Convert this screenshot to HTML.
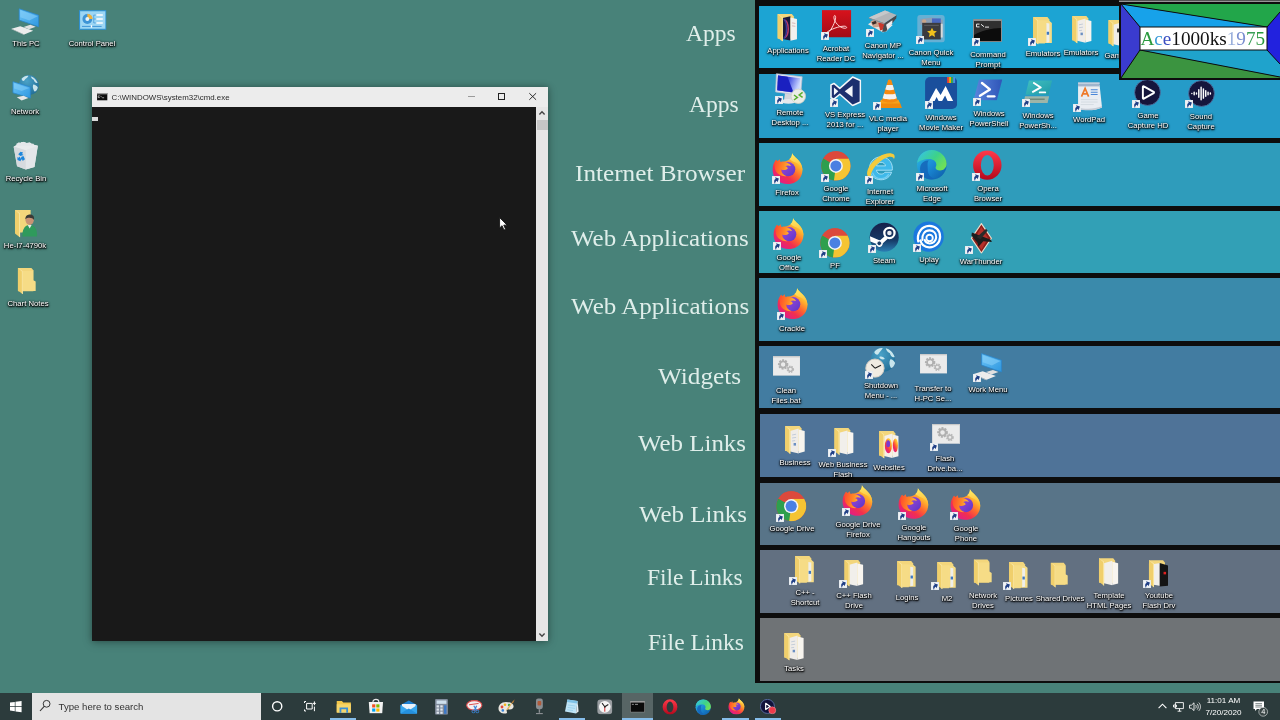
<!DOCTYPE html><html><head><meta charset="utf-8"><title>Desktop</title><style>
*{margin:0;padding:0;box-sizing:border-box}
html,body{width:1280px;height:720px;overflow:hidden;background:#488279;font-family:"Liberation Sans",sans-serif}
#d{position:relative;will-change:transform;filter:blur(.3px);width:1280px;height:720px;overflow:hidden;background:#488279}
.a{position:absolute}
.lb{position:absolute;color:#fff;font-size:8.1px;line-height:10px;text-align:center;white-space:nowrap;transform:translateX(-50%) scaleX(.95);text-shadow:0 1px 1.5px rgba(0,0,0,1),0 0 2px rgba(0,0,0,.9),1px 1px 1.5px rgba(0,0,0,.8),0 1px 3px rgba(0,0,0,.6)}
.cat{position:absolute;color:#dfeeea;font-family:"Liberation Serif",serif;white-space:nowrap;transform-origin:0 0;line-height:1}
svg{position:absolute;overflow:visible}
</style></head><body><div id="d"><svg width="0" height="0" style="position:absolute"><defs>
<linearGradient id="gff" x1="0.95" y1="0.05" x2="0.22" y2="0.98"><stop offset="0" stop-color="#fff04a"/><stop offset="0.3" stop-color="#ffb02e"/><stop offset="0.5" stop-color="#ff6a2e"/><stop offset="0.72" stop-color="#f2304e"/><stop offset="1" stop-color="#df1a92"/></linearGradient><linearGradient id="gfh" x1="0" y1="0.3" x2="1" y2="0.5"><stop offset="0" stop-color="#ff4e2c"/><stop offset="0.55" stop-color="#ff8a26"/><stop offset="1" stop-color="#ffc83a"/></linearGradient>
<linearGradient id="gffp" x1="0" y1="0" x2="1" y2="1"><stop offset="0" stop-color="#a04ad8"/><stop offset="1" stop-color="#5a35c8"/></linearGradient>
<linearGradient id="gfl" x1="0" y1="0" x2="0" y2="1"><stop offset="0" stop-color="#fff06a"/><stop offset="1" stop-color="#ffae2e"/></linearGradient>
<linearGradient id="gacro" x1="0" y1="0" x2="0" y2="1"><stop offset="0" stop-color="#d8121c"/><stop offset="1" stop-color="#a00c16"/></linearGradient>
<linearGradient id="ged" x1="0" y1="0" x2="1" y2="1"><stop offset="0" stop-color="#2fc2df"/><stop offset="0.5" stop-color="#1b8ad6"/><stop offset="1" stop-color="#0c59a4"/></linearGradient>
<linearGradient id="ged2" x1="0" y1="0" x2="1" y2="0.6"><stop offset="0" stop-color="#35c1f1"/><stop offset="0.6" stop-color="#3dd28a"/><stop offset="1" stop-color="#6ee05a"/></linearGradient>
<linearGradient id="gop" x1="0" y1="0" x2="0" y2="1"><stop offset="0" stop-color="#ff3a4a"/><stop offset="1" stop-color="#b4081c"/></linearGradient>
<linearGradient id="gst" x1="0" y1="0" x2="0" y2="1"><stop offset="0" stop-color="#16204a"/><stop offset="0.6" stop-color="#163a66"/><stop offset="1" stop-color="#2a7fb4"/></linearGradient>
<linearGradient id="gps" x1="0" y1="0" x2="1" y2="0"><stop offset="0" stop-color="#5a86dc"/><stop offset="1" stop-color="#2f55b8"/></linearGradient>
<linearGradient id="gpsi" x1="0" y1="0" x2="1" y2="1"><stop offset="0" stop-color="#42c0c0"/><stop offset="1" stop-color="#1e9aa8"/></linearGradient>
<linearGradient id="gmon" x1="0" y1="0" x2="1" y2="1"><stop offset="0" stop-color="#6cc4f6"/><stop offset="1" stop-color="#2f98e0"/></linearGradient>
<linearGradient id="grdp" x1="0" y1="0" x2="1" y2="0.3"><stop offset="0" stop-color="#1a22c8"/><stop offset="0.5" stop-color="#3a48e0"/><stop offset="1" stop-color="#c8d4ff"/></linearGradient>
<radialGradient id="gglobe" cx="0.4" cy="0.3" r="0.8"><stop offset="0" stop-color="#4aa2c8"/><stop offset="1" stop-color="#1f6a92"/></radialGradient>
<linearGradient id="gbin" x1="0" y1="0" x2="1" y2="0"><stop offset="0" stop-color="#d4d8dc"/><stop offset="1" stop-color="#eceef0"/></linearGradient>
<symbol id="sc" viewBox="0 0 8 8"><rect x="0" y="0" width="8" height="8" fill="#f0f3f6" stroke="#cfd8e0" stroke-width="0.5"/><path transform="rotate(-28 4 4.2)" d="M1.3 7.2 C1.1 4.4 2.5 2.9 4.4 2.9 L4.4 1.1 L7.4 4 L4.4 6.8 L4.4 5.1 C3.1 5.1 2.3 5.6 1.3 7.2Z" fill="#1f3f86"/></symbol><symbol id="ff" viewBox="0 0 32 32">
<path d="M20.5 0.3 C22 3.4 26.5 6 29 10 C31.6 14.2 32 19.6 29.6 24 C27 28.8 22 31.8 16 31.8 C7.4 31.8 0.6 25.4 0.6 17.4 C0.6 13 2 9.4 4.2 7 C4.2 8.6 4.6 9.6 5.2 10.4 C5.6 8.6 6.6 7.2 8 6.4 C7.9 7.6 8.3 8.6 9 9.2 C11 8.6 13.4 8.8 15.4 8 C17.8 7 19.6 5 20.2 3 C20.5 2 20.6 1.2 20.5 0.3Z" fill="url(#gff)"/>
<path d="M20.5 0.3 C22 3.4 26.5 6 29 10 C30.6 12.6 31.3 15.4 31.2 18.4 C30 13 26.4 10.6 23.6 9.6 C21.6 8.8 19.4 7.6 18 6.2 C19.2 5.2 19.9 4.1 20.2 3 C20.5 2 20.6 1.2 20.5 0.3Z" fill="url(#gfl)"/>
<circle cx="16.6" cy="16.6" r="7.3" fill="url(#gffp)"/>
<path d="M4.2 7 C6 9 8 9.6 10 9.4 C12.6 9 15.6 9.6 17.8 11.4 C18.6 12 19.2 12.8 19.4 13.4 C17.4 12.4 15 12.6 13.6 13.6 C15 14 16 14.8 16.2 15.8 C14.4 17.8 11.4 17.9 9.4 17 C9.4 20 11.4 22.8 14.8 23.8 C9.6 24.4 4.4 21.4 3 16.2 C2.2 13 2.8 9.6 4.2 7Z" fill="url(#gfh)"/>
</symbol><symbol id="ch" viewBox="0 0 32 32">
<circle cx="16" cy="16" r="15.7" fill="#dc493c"/>
<path d="M16 16 L2.4 8.15 A15.7 15.7 0 0 0 13.9 31.56 L22.8 19.9Z" fill="#2e9f4e"/>
<path d="M16 16 L13.9 31.56 A15.7 15.7 0 0 0 29.6 8.15 L16 8.15Z" fill="#f5c433"/>
<path d="M16 16 L2.4 8.15 A15.7 15.7 0 0 1 29.6 8.15 L16 8.15Z" fill="#dc493c"/>
<path d="M16 16 L9.2 19.9 L2.4 8.15Z" fill="#2e9f4e"/>
<circle cx="16" cy="16" r="7.5" fill="#f2f4f6"/>
<circle cx="16" cy="16" r="5.9" fill="#4a80e2"/>
</symbol><symbol id="ie" viewBox="0 0 32 32">
<path fill-rule="evenodd" d="M29 19.4 H12.2 C12.6 22 14.6 23.6 17.2 23.6 C19 23.6 20.4 22.8 21.2 21.6 H28.4 C26.8 26.4 22.4 29.6 17 29.6 C10 29.6 4.8 24.4 4.8 17.4 C4.8 10.4 10 5.2 17 5.2 C24 5.2 29.2 10.4 29.2 17.4 C29.2 18 29.1 18.8 29 19.4Z M12.3 14.8 H21.9 C21.4 12.4 19.5 11 17.1 11 C14.7 11 12.8 12.4 12.3 14.8Z" fill="#3fb9ea" stroke="#a9e2f7" stroke-width="1"/>
<path d="M8 22 C9.5 26 13 28.4 17 28.4 C20.5 28.4 23.6 26.6 25.4 23.6" fill="none" stroke="#7fd4f4" stroke-width="1.4" opacity="0.8"/>
<path d="M2.6 25 C0.8 20 5.6 11 14.4 5.2 C21 1 28.4 0.2 31 3 C32 4.3 31.8 6.2 30.8 7.8 C30.8 5.2 27.6 3.8 22 6.4 C14 10.2 6.6 19 6 26 C4.6 26.8 3.2 26.2 2.6 25Z" fill="#f3cb3c"/>
</symbol><symbol id="ed" viewBox="0 0 32 32">
<circle cx="16" cy="16" r="15" fill="url(#ged)"/>
<path d="M1.2 14 C2.2 6.4 8.4 1 16 1 C24.4 1 31 7.6 31 15 C31 19 28 21.8 24.4 21.8 C21.6 21.8 19.8 20.6 19.8 19 C19.8 18 20.6 17.4 20.6 15.6 C20.6 12.4 17.4 10 13.4 10 C8 10 3.2 12 1.2 14Z" fill="url(#ged2)"/>
<path d="M12 22 C12 26 15 29.4 20 29.8 C17.5 30.8 14.6 31.2 12 30.4 C6.4 28.8 3 23 4.4 17.6 C5.6 13.4 9.4 11.4 13 11.6 C11 13.4 12 17 12 22Z" fill="#1565b8" opacity="0.85"/>
</symbol><symbol id="op" viewBox="0 0 32 32">
<path fill-rule="evenodd" d="M1 16 A15 15.4 0 1 0 31 16 A15 15.4 0 1 0 1 16Z M9.2 16 A6.8 10.8 0 1 1 22.8 16 A6.8 10.8 0 1 1 9.2 16Z" fill="url(#gop)"/>
</symbol><symbol id="opd" viewBox="0 0 32 32">
<path fill-rule="evenodd" d="M1 16 A15 15.4 0 1 0 31 16 A15 15.4 0 1 0 1 16Z M9.2 16 A6.8 10.8 0 1 1 22.8 16 A6.8 10.8 0 1 1 9.2 16Z" fill="url(#gop)"/>
</symbol><symbol id="steam" viewBox="0 0 32 32">
<circle cx="16" cy="16" r="15.3" fill="url(#gst)"/>
<circle cx="21.5" cy="11.5" r="5.4" fill="none" stroke="#fff" stroke-width="2.4"/>
<circle cx="21.5" cy="11.5" r="2.4" fill="#fff" opacity="0.9"/>
<path d="M1 15 L11.5 19.4 L16.8 14.8 L19.5 18 L14.6 22.4 C14.4 25 12.6 26.4 10.6 26.2 C8.8 26 7.6 24.8 7.4 23 L1.4 20.4Z" fill="#fff"/>
<circle cx="10.8" cy="22.4" r="2.5" fill="#163a66" stroke="#fff" stroke-width="1"/>
</symbol><symbol id="uplay" viewBox="0 0 32 32">
<circle cx="16" cy="16" r="15.6" fill="#1b78de"/>
<path d="M5.4 21 C3.6 13 8.6 5.2 16.6 5 C23.4 4.9 28 10 27.8 16.4 C27.6 22.6 22.6 27.2 16.6 27 C12 26.8 8.6 24 7.6 20" fill="none" stroke="#fff" stroke-width="2.3" stroke-linecap="round"/>
<path d="M9.6 19.4 C8.8 14.2 12 9.6 17 9.6 C21.2 9.6 24 12.8 23.8 16.8 C23.6 20.6 20.4 23.2 17 23 C14.4 22.8 12.6 21.4 12 19.4" fill="none" stroke="#fff" stroke-width="2.1" stroke-linecap="round"/>
<circle cx="17" cy="17.4" r="3.3" fill="none" stroke="#fff" stroke-width="1.9"/>
</symbol><symbol id="wt" viewBox="0 0 24 32">
<path d="M12 0.5 L22.5 16 L12 31.5 L1.5 16Z" fill="#8c1d18" stroke="#e9dccb" stroke-width="1.2"/>
<path d="M12 4 L19 16 L12 28 L5 16Z" fill="#b4302a"/>
<path d="M2 10 L22 17.5 L23 20 L14 19 L9 25 L8 21 L1.5 13Z" fill="#1d1d1d"/>
<path d="M7 15 L17 6 L18.5 8 L11 17Z" fill="#2a2a2a"/>
</symbol><symbol id="gear" viewBox="0 0 28 20">
<rect x="0" y="0" width="28" height="20" fill="#ebebeb" stroke="#d9d9d9" stroke-width="0.6"/>
<rect x="0" y="0" width="28" height="1.2" fill="#c8c8c8"/>
<circle cx="10.5" cy="8.5" r="4" fill="none" stroke="#b0b0b0" stroke-width="2.8" stroke-dasharray="1.8 1.1"/>
<circle cx="10.5" cy="8.5" r="3.2" fill="none" stroke="#b0b0b0" stroke-width="1.8"/>
<circle cx="18" cy="13.5" r="2.8" fill="none" stroke="#b8b8b8" stroke-width="2.2" stroke-dasharray="1.4 0.9"/>
<circle cx="18" cy="13.5" r="2.2" fill="none" stroke="#b8b8b8" stroke-width="1.4"/>
</symbol><symbol id="pc" viewBox="0 0 30 28">
<path d="M8.5 0.6 L28.6 7.3 L28.6 19.2 L8.5 12.3Z" fill="url(#gmon)" stroke="#2a86cc" stroke-width="0.8"/>
<path d="M9.6 2.2 L27.6 8.2 L19 12.6 L9.6 9.4Z" fill="#8ad2fa" opacity="0.55"/>
<path d="M13 19.4 L20 17.2 L25.6 19.3 L18.6 21.8Z" fill="#e0e0e0"/>
<path d="M0.5 21.2 L9.6 18.6 L23 23.4 L13.6 27.2Z" fill="#ececec"/>
<path d="M0.5 21.2 L13.6 27.2 L13.6 27.8 L0.5 21.8Z" fill="#c8c8c8"/>
</symbol><symbol id="net" viewBox="0 0 28 28">
<circle cx="17.5" cy="11.5" r="10.5" fill="url(#gglobe)"/>
<path d="M10 5 C12 2.5 15 1.6 17 2 C16 4 14 4.5 13 6.5 C12 8 10.5 7.5 10 5Z M19.5 2.5 C22.5 3 25.5 6 26.5 9 C25 10 23 8 22.5 6 C21 5.5 20 4 19.5 2.5Z M22 11 C24 11 26 12.5 26.8 14 C26 17 24.5 18.5 23 18 C22 15.5 21 13.5 22 11Z" fill="#d9eef2" opacity="0.9"/>
<path d="M1 8 L19 13.5 L19 25 L1 19.5Z" fill="url(#gmon)" stroke="#2a86cc" stroke-width="0.8"/>
<path d="M2 9.5 L18 14.5 L10 17.5 L2 15Z" fill="#8ad2fa" opacity="0.5"/>
<path d="M5 24 L12 22.5 L17 25 L10 27.5Z" fill="#e6e6e6"/>
</symbol><symbol id="cp" viewBox="0 0 28 20">
<rect x="0.5" y="0.5" width="27" height="19" fill="#7cc6ee" stroke="#2f8fd0" stroke-width="1"/>
<rect x="1.5" y="1.5" width="25" height="17" fill="#9dd6f4"/>
<circle cx="8.5" cy="9" r="5" fill="#3d94d6"/>
<path d="M8.5 9 L8.5 3.6 A5.4 5.4 0 0 1 13.9 9Z" fill="#f0b33c"/>
<circle cx="8.5" cy="9" r="2" fill="#e8f4fb"/>
<rect x="17.5" y="4" width="7" height="2" rx="1" fill="#e8f4fb"/><rect x="17.5" y="8" width="7" height="2" rx="1" fill="#e8f4fb"/><rect x="17.5" y="12" width="7" height="2" rx="1" fill="#e8f4fb"/>
<path d="M15 5 H17 M15 5 V13 H17 M15 9 H17" stroke="#3d94d6" stroke-width="0.7" fill="none"/>
<rect x="3" y="16" width="20" height="1" fill="#3d94d6"/><rect x="12" y="15.3" width="1.4" height="2.4" fill="#fff"/>
</symbol><symbol id="bin" viewBox="0 0 26 30">
<path d="M0.5 6 L9 1 L25.5 5 L22 27 L13 29.5 L4 26Z" fill="url(#gbin)"/>
<path d="M0.5 6 L13 9.5 L25.5 5 L9 1Z" fill="#e9ebed"/>
<path d="M13 9.5 L13 29.5 L22 27 L25.5 5Z" fill="#e3e6e9"/>
<path d="M0.5 6 L13 9.5 L13 29.5 L4 26Z" fill="#d6dade"/>
<path d="M3 3.2 l3-1.8 l2 1 l3-1.6 l3 1.2 l3-0.8 l2 1.4 l3 0.4 l-2 2 l-16 0Z" fill="#e4e7ea"/>
<g fill="#1c86dc"><path d="M5.2 13.6 l2.4-2.6 l2.6 1 l-1 1.4 l1.6 1.2 l-3.4 0.8Z"/><path d="M10.6 15.4 l1.6 3.4 l-2.4 2 l-0.6-1.6 l-2 0.2 l1.4-3.2Z"/><path d="M7.6 21 l-3.2-1.4 l0-3 l1.4 0.8 l1-1.4 l1.4 3.2Z"/></g>
</symbol><symbol id="fdoc" viewBox="0 0 21 28"><path d="M1 0 H15.5 L17.5 2.5 V25 H1Z" fill="#f3d67c"/><path d="M6 5 L14.5 2.6 V27.4 L6 25.4Z" fill="#efece8"/><path d="M14.5 3.6 L20.6 5 V25.6 L14.5 27.2Z" fill="#f7f4ee"/><path d="M8 9 l4-0.8 M8 12 l4-0.6 M8 15 l3-0.4" stroke="#b9c4d4" stroke-width="0.8"/><rect x="9.5" y="17" width="2.4" height="2.6" fill="#4a78b8" opacity="0.8"/><path d="M1 0 L6.2 3.2 V28 L1 24Z" fill="#f0cf6c"/><path d="M1 0 L6.2 3.2 V28 L5.2 27.2 V3.8Z" fill="#f9e6a2"/></symbol><symbol id="fdoc2" viewBox="0 0 21 28"><path d="M1 0 H15.5 L17.5 2.5 V25 H1Z" fill="#f3d67c"/><path d="M6 5 L14.5 2.6 V27.4 L6 25.4Z" fill="#f1efeb"/><path d="M14.5 3.6 L20.6 5 V25.6 L14.5 27.2Z" fill="#f8f5f0"/><path d="M1 0 L6.2 3.2 V28 L1 24Z" fill="#f0cf6c"/><path d="M1 0 L6.2 3.2 V28 L5.2 27.2 V3.8Z" fill="#f9e6a2"/></symbol><symbol id="fcl" viewBox="0 0 21 28"><path d="M1 0 H15.5 L17.5 2.5 V25 H1Z" fill="#f3d67c"/><path d="M6 3.5 H17 L20 6 V26.5 H6Z" fill="#f6dc86"/><path d="M14.5 6 L17.5 6.5 V25.5 L14.5 26Z" fill="#eeeeea"/><rect x="14.8" y="15" width="2.4" height="3" fill="#3f78c0"/><path d="M1 0 L6.2 3.2 V28 L1 24Z" fill="#f0cf6c"/><path d="M1 0 L6.2 3.2 V28 L5.2 27.2 V3.8Z" fill="#f9e6a2"/><path d="M6 3.5 H13 V27 H6Z" fill="#f6dc86" opacity="0.9"/></symbol><symbol id="fpl" viewBox="0 0 21 28"><path d="M1 0 H15.5 L17.5 2.5 V25 H1Z" fill="#f3d67c"/><path d="M6 3.2 H17.5 V13 L20 14.5 V24.5 H6Z" fill="#f6dc86"/><path d="M1 0 L6.2 3.2 V28 L1 24Z" fill="#f0cf6c"/><path d="M1 0 L6.2 3.2 V28 L5.2 27.2 V3.8Z" fill="#f9e6a2"/></symbol><symbol id="fapp" viewBox="0 0 21 28"><path d="M1 0 H15.5 L17.5 2.5 V25 H1Z" fill="#f3d67c"/><path d="M6 4 L14 2.4 V27 L6 25.4Z" fill="#1c1a3a"/><path d="M8 6 C13 8 13 22 8 24" fill="none" stroke="#b63a6a" stroke-width="1.6"/><path d="M7 5 C11 8 11 22 7 25" fill="none" stroke="#3a3a9a" stroke-width="1.4"/><path d="M14 3.6 L20.6 5 V25.6 L14 27.2Z" fill="#f3f1ee"/><path d="M15.5 9 l3.5 0.6 M15.5 12 l3.5 0.5" stroke="#d0a0a0" stroke-width="0.7"/><path d="M1 0 L6.2 3.2 V28 L1 24Z" fill="#f0cf6c"/><path d="M1 0 L6.2 3.2 V28 L5.2 27.2 V3.8Z" fill="#f9e6a2"/></symbol><symbol id="fweb" viewBox="0 0 21 28"><path d="M1 0 H15.5 L17.5 2.5 V25 H1Z" fill="#f3d67c"/><path d="M6 5 L14.5 2.6 V27.4 L6 25.4Z" fill="#f6efe8"/><path d="M14.5 3.6 L20.6 5 V25.6 L14.5 27.2Z" fill="#f6f0ea"/><ellipse cx="10.4" cy="15" rx="3.6" ry="7.6" fill="url(#gff)"/><ellipse cx="10.2" cy="13" rx="2" ry="3.6" fill="#7a3ad0"/><ellipse cx="17.5" cy="14.5" rx="2.6" ry="7" fill="url(#gff)"/><path d="M1 0 L6.2 3.2 V28 L1 24Z" fill="#f0cf6c"/><path d="M1 0 L6.2 3.2 V28 L5.2 27.2 V3.8Z" fill="#f9e6a2"/></symbol><symbol id="fyt" viewBox="0 0 21 28"><path d="M1 0 H15.5 L17.5 2.5 V25 H1Z" fill="#f3d67c"/><path d="M6 4 L13 2.8 V26.6 L6 25.4Z" fill="#f1efeb"/><path d="M12 3 L20.6 5.4 V26.4 L12 27.2Z" fill="#141414"/><rect x="16" y="12" width="2.6" height="2.6" fill="#e02020"/><path d="M1 0 L6.2 3.2 V28 L1 24Z" fill="#f0cf6c"/><path d="M1 0 L6.2 3.2 V28 L5.2 27.2 V3.8Z" fill="#f9e6a2"/></symbol><symbol id="fgam" viewBox="0 0 21 28"><path d="M1 0 H15.5 L17.5 2.5 V25 H1Z" fill="#f3d67c"/><path d="M6 5 L14.5 2.6 V27.4 L6 25.4Z" fill="#efece8"/><path d="M14.5 3.6 L20.6 5 V25.6 L14.5 27.2Z" fill="#f7f4ee"/><rect x="10" y="9" width="2.2" height="4" fill="#333"/><path d="M1 0 L6.2 3.2 V28 L1 24Z" fill="#f0cf6c"/><path d="M1 0 L6.2 3.2 V28 L5.2 27.2 V3.8Z" fill="#f9e6a2"/></symbol><symbol id="fusr" viewBox="0 0 24 28"><path d="M1 0 H17 V23 H1Z" fill="#f3d67c"/><path d="M1 0 L6.2 3.2 V28 L1 24Z" fill="#f0cf6c"/><path d="M1 0 L6.2 3.2 V28 L5.2 27.2 V3.8Z" fill="#f9e6a2"/><ellipse cx="16" cy="10.5" rx="4.2" ry="4.6" fill="#c99274"/><path d="M11.6 9.6 C11.6 5.6 14 4.6 16.6 4.6 C19.6 4.6 21 7 20.4 10 C19.4 8.4 17 7.6 14.6 8 C13.4 8.2 12.4 8.6 11.6 9.6Z" fill="#3a3a36"/><path d="M8.5 26 C8.5 18.5 12 15 16 15 C20.5 15 23.6 18.5 23.6 26 L23.6 27 H8.5Z" fill="#2f9a5c"/><path d="M14 15.4 L16 19 L18 15.4Z" fill="#e8e8e8"/></symbol><symbol id="acro" viewBox="0 0 30 28"><rect x="0" y="0" width="30" height="28" fill="url(#gacro)"/><path d="M5 23.5 C8 23 12.5 15 13.8 9 C14.6 5 12.2 4.4 12.2 7.4 C12.2 12 18 18.4 23.4 18.6 C26.4 18.6 25.6 16.4 22.6 16.4 C17 16.6 9 19.6 5.4 22.4 C4 23.6 4.4 23.8 5 23.5Z" fill="none" stroke="#ffd6d6" stroke-width="1"/></symbol><symbol id="scan" viewBox="0 0 30 24"><path d="M0.4 14.5 L6 11 L26 15.5 L16 23Z" fill="#e6e2df"/><path d="M3 11.5 L9 9 L14 17 L6 18Z" fill="#c9a18c"/><path d="M11 13 L17 12 L19 19 L13 21Z" fill="#c8372c"/><path d="M4.4 12.6 L8.4 11 L9.4 13.6 L5.4 15Z" fill="#3a2a26"/><path d="M18 14 L25 16 L19 22.4 L15.6 21Z" fill="#f4f4f6"/><path d="M17.2 13.6 L29.9 5 L29.4 8.4 L19 22 L15 22.6Z" fill="#4a4a4e"/><path d="M19 15 L25.5 10.5 L25.4 14.2 L20.4 20.4Z" fill="#ececf0"/><path d="M1.4 7.8 L17.9 0.4 L29.9 5 L17.2 13.6Z" fill="#b3b5b8"/><path d="M1.4 7.8 L17.9 0.4 L23 2.4 L6 9.8Z" fill="#c6c8ca"/><path d="M1.4 7.8 L17.2 13.6 L17.2 14.8 L1.4 8.8Z" fill="#8a8c90"/></symbol><symbol id="cqm" viewBox="0 0 28 28"><rect x="0" y="0" width="28" height="28" rx="3" fill="#7fb4d4" opacity="0.75"/><path d="M3 4 L15 2.5 L26 5 L26 10 L3 10Z" fill="#8e9fb4"/><circle cx="7" cy="6.5" r="2.2" fill="#c9a58a"/><rect x="15" y="3.5" width="9" height="5" fill="#4a68c0"/><rect x="5" y="8" width="19" height="17" fill="#3b3b3e"/><rect x="7" y="10" width="15" height="1.2" fill="#5a5a5e"/><path d="M15 13 l1.5 3.2 3.5 0.4 -2.6 2.4 0.7 3.4 -3.1-1.7 -3.1 1.7 0.7-3.4 -2.6-2.4 3.5-0.4Z" fill="#f2c21c"/><rect x="24" y="9" width="2" height="14" fill="#d9d9d9"/></symbol><symbol id="cmd" viewBox="0 0 29 23"><rect x="0" y="0" width="29" height="23" rx="1" fill="#8e8e8e"/><rect x="1" y="2" width="27" height="20" fill="#0c0c0c"/><path d="M1 2 H28 V9 C18 9 8 12 1 16Z" fill="#3a3a3a" opacity="0.8"/><path d="M3.5 5 h3 M3.5 7.8 h3 M3.5 5 v2.8 M8 5.2 l3 2.4 M12 8 h4" stroke="#e8e8e8" stroke-width="1" fill="none"/></symbol><symbol id="cmds" viewBox="0 0 11 8"><rect x="0" y="0" width="11" height="8" fill="#0c0c0c"/><rect x="0" y="0" width="11" height="1.4" fill="#9a9a9a"/><path d="M1.2 3 h1.6 M1.2 4.8 h1.6 M1.2 3 v1.8 M3.6 3 l1.4 1.6 M5.4 5 h2" stroke="#ddd" stroke-width="0.7" fill="none"/></symbol><symbol id="rdp" viewBox="0 0 31 31"><path d="M10 20 L19 21 L19 26.5 L9 27.5Z" fill="#d4d6dc"/><ellipse cx="13.5" cy="28.4" rx="8" ry="2.4" fill="#e6e8ec"/><path d="M1.4 0.7 L27.2 3.8 L25.6 22.4 L0.6 18.9Z" fill="#dfe3ee" stroke="#b9c0d4" stroke-width="0.7"/><path d="M3 2.6 L25.4 5.3 L24 20.4 L2.3 17.3Z" fill="url(#grdp)"/><path d="M3 2.6 L12.5 3.8 L18.5 19.6 L2.3 17.3Z" fill="#1a20c0"/><circle cx="23.3" cy="23.3" r="7.2" fill="#ebece6" stroke="#cfd2c6" stroke-width="0.8"/><path d="M19 22 L22.4 24.4 L19 27 M27.6 19.4 L24.2 22 L27.6 24.4" fill="none" stroke="#5ab030" stroke-width="1.5"/></symbol><symbol id="vs" viewBox="0 0 32 31"><path d="M23 1 L31 4.5 V26.5 L23 30 L10 18.5 L4 23.5 L1 22 V9 L4 7.5 L10 12.5Z" fill="#1c2f6e" stroke="#f4f6fa" stroke-width="1.6" stroke-linejoin="round"/><path d="M23 9.5 V21.5 L15 15.5Z" fill="#f4f6fa"/><path d="M4 11.5 V19.5 L8.5 15.5Z" fill="#f4f6fa"/></symbol><symbol id="vlc" viewBox="0 0 26 30"><path d="M2.5 24 L23.5 24 L25.5 29.5 L0.5 29.5Z" fill="#f08a0c"/><path d="M4 21 L22 21 L23.5 25 L2.5 25Z" fill="#f7a21a"/><path d="M11.2 1.5 C11.6 0 14.4 0 14.8 1.5 L21 22 C17 24.4 9 24.4 5 22Z" fill="#f58a10"/><path d="M9.9 6 L16.1 6 L17.5 10.6 C15 11.6 11 11.6 8.5 10.6Z" fill="#f2f2f2"/><path d="M7.3 14.6 C10 15.8 16 15.8 18.7 14.6 L20.2 19.6 C17 21.2 9 21.2 5.8 19.6Z" fill="#f2f2f2"/></symbol><symbol id="mm" viewBox="0 0 32 32"><rect x="0" y="0" width="32" height="32" rx="5" fill="#1a4f9c"/><path d="M4 24 L11 11 L15.5 18 L20.5 9 L28 24 L22.5 24 L20 18.5 L17 24 L13.5 24 L11.5 20 L9.5 24Z" fill="#fff"/><rect x="22" y="0" width="2" height="6" fill="#ea4335"/><rect x="24" y="0" width="2" height="6" fill="#f4b400"/><rect x="26" y="0" width="2" height="6" fill="#34a853"/><rect x="28" y="0" width="2" height="6" fill="#4a90e2"/></symbol><symbol id="ps" viewBox="0 0 30 22"><path d="M6 0.5 H29.5 L24 21.5 H0.5Z" fill="url(#gps)"/><path d="M9 4 L17 10.5 L7 17" fill="none" stroke="#fff" stroke-width="2.4" stroke-linecap="round" stroke-linejoin="round"/><path d="M15 17.5 H21.5" stroke="#fff" stroke-width="2.4" stroke-linecap="round"/></symbol><symbol id="psi" viewBox="0 0 30 24"><path d="M6 0.5 H29.5 L26 15 H2.5Z" fill="url(#gpsi)"/><path d="M11 3 L18 7.6 L10 12" fill="none" stroke="#fff" stroke-width="2" stroke-linecap="round" stroke-linejoin="round"/><path d="M17 12.6 H22.5" stroke="#fff" stroke-width="2" stroke-linecap="round"/><path d="M2 16.5 H26.5 L25 23.5 H0.5Z" fill="#9db5a8"/><path d="M6 19.5 H22" stroke="#6f8a7c" stroke-width="1.6"/></symbol><symbol id="wp" viewBox="0 0 26 29"><path d="M1 3 H23 L25.5 26 C18 29.5 8 29.5 1 27.5Z" fill="#e9edf2"/><rect x="1" y="0.5" width="22" height="4" fill="#9fb4cc"/><rect x="1" y="0.5" width="22" height="1.4" fill="#c8d4e2"/><path d="M4.5 15 L8.2 6.5 L11.8 15 M5.8 12.2 H10.4" fill="none" stroke="#ee7a2a" stroke-width="1.7"/><path d="M14 8 H21 M14 10.4 H21 M14 12.8 H21" stroke="#4a86d8" stroke-width="1.1"/><path d="M4 18 H21 M4 20.5 H21 M4 23 H17" stroke="#d3d9e0" stroke-width="0.9"/><path d="M25.5 26 C18 29.5 8 29.5 1 27.5 L1 26 C8 28 18 28 25.4 24.6Z" fill="#c4ccd6"/></symbol><symbol id="gc" viewBox="0 0 28 28"><circle cx="14" cy="14" r="13.4" fill="#15153c" stroke="#5a78a8" stroke-width="0.8"/><path d="M10.2 7.6 L20.4 13.4 C20.9 13.7 20.9 14.3 20.4 14.6 L10.2 20.4 C9.7 20.7 9.2 20.4 9.2 19.8 V8.2 C9.2 7.6 9.7 7.3 10.2 7.6Z" fill="none" stroke="#fff" stroke-width="2" stroke-linejoin="round"/></symbol><symbol id="snd" viewBox="0 0 28 28"><circle cx="14" cy="14" r="13.4" fill="#15153c" stroke="#5a78a8" stroke-width="0.8"/><path d="M4 14 v0.1 M6.4 12.6 v2.8 M8.8 13.4 v1.2 M11.2 10 v8 M13.6 7.6 v12.8 M16 9.2 v9.6 M18.4 11.2 v5.6 M20.8 12.6 v2.8 M23.2 13.4 v1.2" stroke="#fff" stroke-width="1.5" stroke-linecap="round"/></symbol><symbol id="shut" viewBox="0 0 30 31"><circle cx="17.8" cy="12.6" r="12.3" fill="url(#gglobe)"/><path d="M9 5 C11 2 14.4 0.8 17.6 1 C16.6 3.4 14.4 4.4 13.4 6.8 C12.4 8.6 9.8 7.8 9 5Z M20.6 1.2 C24.4 2 28.4 5.6 29.6 10 C27.4 11.2 25.2 8.6 24.8 6.2 C23 5.6 21.2 3.6 20.6 1.2Z M25.2 12.4 C27.4 12.4 29.4 14.4 30 16.2 C29 19.8 27.2 21.6 25.6 21 C24.4 18.2 23.6 15.6 25.2 12.4Z M14 10 C16 9 19 10 19.6 12 C18 13 15 12.6 14 10Z" fill="#d6eef2" opacity="0.92"/><circle cx="9.7" cy="21.3" r="9.2" fill="#f0ebe2" stroke="#d3cdc2" stroke-width="1"/><path d="M9.7 21.3 L6 17.6 M9.7 21.3 L15.8 18.4" stroke="#222" stroke-width="1.1"/></symbol><symbol id="tb_exp" viewBox="0 0 16 14"><path d="M0.5 1 H6 L7.4 2.6 H15.5 V13 H0.5Z" fill="#f3c74a"/><path d="M0.5 4.4 H15.5 V13.4 H0.5Z" fill="#f7d56a"/><path d="M3.5 8 H12.5 V13.4 H3.5Z" fill="#3a8fd8"/><rect x="5.4" y="9.8" width="5.2" height="3.6" fill="#f7d56a"/></symbol><symbol id="tb_store" viewBox="0 0 16 16"><path d="M5 4 C5 0.5 11 0.5 11 4" fill="none" stroke="#e8e8e8" stroke-width="1.2"/><path d="M0.8 4 H15.2 L14.4 15.5 H1.6Z" fill="#f2f2f2"/><rect x="4.2" y="6.4" width="3.2" height="3.2" fill="#f25022"/><rect x="8.4" y="6.4" width="3.2" height="3.2" fill="#7fba00"/><rect x="4.2" y="10.6" width="3.2" height="3.2" fill="#00a4ef"/><rect x="8.4" y="10.6" width="3.2" height="3.2" fill="#ffb900"/></symbol><symbol id="tb_mail" viewBox="0 0 18 14"><path d="M0.5 5 L9 0.3 L17.5 5 V13.6 H0.5Z" fill="#1e7fd0"/><path d="M2 4 H16 V10 H2Z" fill="#e9f2fa"/><path d="M0.5 5 L9 10.5 L17.5 5 V13.6 H0.5Z" fill="#36a6ee"/><path d="M0.5 13.6 L9 8.6 L17.5 13.6Z" fill="#2490de"/></symbol><symbol id="tb_calc" viewBox="0 0 13 16"><rect x="0" y="0" width="13" height="16" rx="1" fill="#7f8a9a"/><rect x="1.5" y="1.5" width="10" height="3.4" fill="#cfe0ee"/><g fill="#dfe6ee"><rect x="1.5" y="6.4" width="2.4" height="2.2"/><rect x="5.3" y="6.4" width="2.4" height="2.2"/><rect x="1.5" y="9.6" width="2.4" height="2.2"/><rect x="5.3" y="9.6" width="2.4" height="2.2"/><rect x="1.5" y="12.8" width="2.4" height="2.2"/><rect x="5.3" y="12.8" width="2.4" height="2.2"/></g><rect x="9.1" y="6.4" width="2.4" height="8.6" fill="#3a78c8"/></symbol><symbol id="tb_snip" viewBox="0 0 17 14"><ellipse cx="8.5" cy="5.6" rx="8" ry="5" fill="#f4f0f0" stroke="#d84a4a" stroke-width="1.2"/><path d="M3 5 L13 3.6" stroke="#d84a4a" stroke-width="1"/><path d="M8 6 L11 11 M11 6 L8.5 11" stroke="#3a86d8" stroke-width="1.3"/><circle cx="11.6" cy="12" r="1.5" fill="none" stroke="#3a86d8" stroke-width="1"/><circle cx="7.6" cy="12" r="1.5" fill="none" stroke="#3a86d8" stroke-width="1"/></symbol><symbol id="tb_paint" viewBox="0 0 17 15"><path d="M8 3 C3 3 0.5 6.4 0.5 9.4 C0.5 12.6 3.4 14.6 7 14.6 C9 14.6 9.4 13.4 8.8 12.4 C8 11 9.4 10.2 11 10.4 C14 10.8 15.6 9 15.6 7.4 C15.6 4.6 12.4 3 8 3Z" fill="#e9e6df"/><circle cx="4" cy="8" r="1.4" fill="#e24a3a"/><circle cx="7" cy="5.8" r="1.3" fill="#f2b41c"/><circle cx="4.8" cy="11.4" r="1.3" fill="#3a86d8"/><circle cx="11" cy="6" r="1.2" fill="#4aaa4a"/><path d="M16.4 0.4 L9.4 9 L8 11.4 L10.6 10 Z" fill="#e9b45a"/><path d="M16.8 0.2 L14 3.6 L15 4.2Z" fill="#c87a2a"/></symbol><symbol id="tb_mic" viewBox="0 0 11 17"><rect x="2" y="0.5" width="7" height="11" rx="2.2" fill="#8a8e92"/><rect x="3.6" y="3" width="3.8" height="4.6" rx="1" fill="#b05a3a"/><path d="M5.5 11.5 V15 M2 16 H9" stroke="#8a8e92" stroke-width="1.4"/></symbol><symbol id="tb_note" viewBox="0 0 15 15"><path d="M3.4 0.6 L13.6 2 L12 14.4 L1 12.4Z" fill="#bfe4f6"/><path d="M3.4 0.6 L13.6 2 L13.2 4.4 L3 3Z" fill="#7fc2e6"/><path d="M12 14.4 L14.6 12.6 L13.6 2Z" fill="#e8eef2"/><path d="M4 6 L11.4 7 M3.6 8.4 L11 9.4 M3.2 10.8 L9 11.6" stroke="#8fcbe8" stroke-width="0.7"/></symbol><symbol id="tb_clock" viewBox="0 0 16 16"><rect x="0.4" y="0.4" width="15.2" height="15.2" rx="3.4" fill="#9a9ea2"/><circle cx="8" cy="8" r="6" fill="#f6f6f6"/><path d="M8 8 L5.2 4.2 M8 8 L11.6 5.6" stroke="#222" stroke-width="1.1"/><path d="M8 8 L8 13" stroke="#d02a2a" stroke-width="1"/><circle cx="8" cy="8" r="0.9" fill="#222"/></symbol><symbol id="tb_cmd" viewBox="0 0 15 11.5"><rect x="0" y="0" width="15" height="11.5" rx="0.6" fill="#9a9a9a"/><rect x="0.6" y="1.6" width="13.8" height="9.3" fill="#0a0a0a"/><path d="M1.8 3.4 h2 M5 3.4 h3" stroke="#ccc" stroke-width="0.7"/></symbol><symbol id="tb_gc" viewBox="0 0 17 16"><circle cx="7.6" cy="7.6" r="7.2" fill="#12123a" stroke="#5a70a8" stroke-width="0.9"/><path d="M5.8 4.4 L10.4 7.6 L5.8 10.8Z" fill="none" stroke="#fff" stroke-width="1.2" stroke-linejoin="round"/><circle cx="12.6" cy="11.6" r="3.6" fill="#ee3a4a"/><circle cx="12.6" cy="11.6" r="3.6" fill="none" stroke="#f8a0a8" stroke-width="0.5"/></symbol></defs></svg>
<svg class="a" style="left:11px;top:8px" width="29" height="27.5" ><use href="#pc" width="29" height="27.5"/></svg>
<div class="lb" style="left:25.5px;top:39.449999999999996px">This PC</div>
<svg class="a" style="left:78.5px;top:10px" width="27.5" height="20" ><use href="#cp" width="27.5" height="20"/></svg>
<div class="lb" style="left:92.3px;top:39.15px">Control Panel</div>
<svg class="a" style="left:12px;top:74.4px" width="27" height="27" ><use href="#net" width="27" height="27"/></svg>
<div class="lb" style="left:25.2px;top:106.85000000000001px">Network</div>
<svg class="a" style="left:12.5px;top:140.5px" width="25.5" height="29" ><use href="#bin" width="25.5" height="29"/></svg>
<div class="lb" style="left:25.6px;top:174.45000000000002px">Recycle Bin</div>
<svg class="a" style="left:14.2px;top:210px" width="23.5" height="27.4" ><use href="#fusr" width="23.5" height="27.4"/></svg>
<div class="lb" style="left:25.4px;top:241.45000000000002px">He-I7-4790k</div>
<svg class="a" style="left:17px;top:267.5px" width="19.6" height="26.2" ><use href="#fpl" width="19.6" height="26.2"/></svg>
<div class="lb" style="left:28.4px;top:298.95px">Chart Notes</div>
<div class="cat" id="cat0" style="left:685.5px;top:21.4px;font-size:24px;transform:scaleX(0.9808)">Apps</div>
<div class="cat" id="cat1" style="left:688.5px;top:92.2px;font-size:24px;transform:scaleX(0.9828)">Apps</div>
<div class="cat" id="cat2" style="left:574.8px;top:161.1px;font-size:24px;transform:scaleX(1.0509)">Internet Browser</div>
<div class="cat" id="cat3" style="left:570.8px;top:225.5px;font-size:24px;transform:scaleX(1.0415)">Web Applications</div>
<div class="cat" id="cat4" style="left:571.2px;top:293.8px;font-size:24px;transform:scaleX(1.0444)">Web Applications</div>
<div class="cat" id="cat5" style="left:657.5px;top:363.6px;font-size:24px;transform:scaleX(1.0502)">Widgets</div>
<div class="cat" id="cat6" style="left:638.0px;top:431.3px;font-size:24px;transform:scaleX(1.0378)">Web Links</div>
<div class="cat" id="cat7" style="left:639.4px;top:501.7px;font-size:24px;transform:scaleX(1.0378)">Web Links</div>
<div class="cat" id="cat8" style="left:646.6px;top:564.7px;font-size:24px;transform:scaleX(0.9764)">File Links</div>
<div class="cat" id="cat9" style="left:648.0px;top:630.4px;font-size:24px;transform:scaleX(0.9794)">File Links</div>
<div class="a" style="left:92px;top:87.3px;width:455.8px;height:553.7px;background:#ececec;box-shadow:0 0 6px rgba(0,0,0,.3),0 2px 10px rgba(0,0,0,.18)"></div>
<div class="a" style="left:92px;top:107.4px;width:444px;height:533.6px;background:#191919"></div>
<div class="a" style="left:536px;top:107.4px;width:11.8px;height:533.6px;background:#e6e6e6"></div>
<div class="a" style="left:537px;top:119.5px;width:10.5px;height:10.5px;background:#c6c6c6"></div>
<svg class="a" style="left:538px;top:110px" width="8" height="6" viewBox="0 0 8 6"><path d="M1.4 4.4 L4 1.8 L6.6 4.4" fill="none" stroke="#444" stroke-width="1.4"/></svg>
<svg class="a" style="left:538px;top:632px" width="8" height="6" viewBox="0 0 8 6"><path d="M1.4 1.6 L4 4.2 L6.6 1.6" fill="none" stroke="#444" stroke-width="1.4"/></svg>
<svg class="a" style="left:97.4px;top:93.2px" width="10.6" height="7.6" ><use href="#cmds" width="10.6" height="7.6"/></svg>
<div class="a" id="ttl" style="left:111.6px;top:92.5px;font-size:7.9px;line-height:10px;color:#2a2a2a;white-space:nowrap">C:\WINDOWS\system32\cmd.exe</div>
<div class="a" style="left:468px;top:96.4px;width:7px;height:1px;background:#9a9a9a"></div>
<div class="a" style="left:498px;top:93.3px;width:7px;height:6.6px;border:.8px solid #222"></div>
<svg class="a" style="left:528.6px;top:93px" width="7.4" height="7" viewBox="0 0 7.4 7"><path d="M0.3 0.2 L7.1 6.8 M7.1 0.2 L0.3 6.8" stroke="#222" stroke-width="0.95"/></svg>
<div class="a" style="left:92px;top:117px;width:6px;height:3.6px;background:#dcdcdc"></div>
<svg class="a" style="left:498.9px;top:217.1px" width="9.5" height="14.2" viewBox="0 0 10 15"><path d="M0.6 0.6 V11.6 L3.2 9.2 L5.2 13.8 L7 13 L5 8.6 L8.6 8.6Z" fill="#fff" stroke="#111" stroke-width="0.9" stroke-linejoin="round"/></svg>
<div class="a" style="left:755px;top:0;width:525px;height:683px;background:#0d0d0d"></div>
<div class="a" style="left:758.6px;top:5.8px;width:521.4px;height:62.4px;background:#1ca4d3"></div>
<div class="a" style="left:758.8px;top:74px;width:521.2px;height:63.6px;background:#259bc8"></div>
<div class="a" style="left:758.9px;top:142.8px;width:521.1px;height:63.0px;background:#2f9cbb"></div>
<div class="a" style="left:759.1px;top:210.6px;width:520.9px;height:62.6px;background:#32a0b6"></div>
<div class="a" style="left:759.2px;top:278px;width:520.8px;height:62.6px;background:#3a8aab"></div>
<div class="a" style="left:759.4px;top:345.6px;width:520.6px;height:62.6px;background:#427ca1"></div>
<div class="a" style="left:759.6px;top:414.2px;width:520.4px;height:62.8px;background:#4f7398"></div>
<div class="a" style="left:759.7px;top:482.5px;width:520.3px;height:62.7px;background:#587488"></div>
<div class="a" style="left:759.9px;top:550.2px;width:520.1px;height:62.4px;background:#627081"></div>
<div class="a" style="left:760.0px;top:618px;width:520.0px;height:63.0px;background:#6f7376"></div>
<svg class="a" style="left:776.4px;top:14px" width="22" height="27.6" ><use href="#fapp" width="22" height="27.6"/></svg>
<div class="lb" style="left:787.8px;top:45.949999999999996px">Applications</div>
<svg class="a" style="left:821.7px;top:9.7px" width="29.3" height="27.6" ><use href="#acro" width="29.3" height="27.6"/></svg>
<svg class="a" style="left:820.5px;top:31.5px" width="8" height="8" ><use href="#sc" width="8" height="8"/></svg>
<div class="lb" style="left:836px;top:44.05px">Acrobat<br>Reader DC</div>
<svg class="a" style="left:866.7px;top:10px" width="30.3" height="23.4" ><use href="#scan" width="30.3" height="23.4"/></svg>
<svg class="a" style="left:866px;top:29px" width="8" height="8" ><use href="#sc" width="8" height="8"/></svg>
<div class="lb" style="left:882.6px;top:40.65px">Canon MP<br>Navigator ...</div>
<svg class="a" style="left:917px;top:14.8px" width="28" height="27.4" ><use href="#cqm" width="28" height="27.4"/></svg>
<svg class="a" style="left:915.5px;top:36px" width="8" height="8" ><use href="#sc" width="8" height="8"/></svg>
<div class="lb" style="left:930.6px;top:47.949999999999996px">Canon Quick<br>Menu</div>
<svg class="a" style="left:972.6px;top:18.8px" width="29" height="23.2" ><use href="#cmd" width="29" height="23.2"/></svg>
<svg class="a" style="left:972px;top:38px" width="8" height="8" ><use href="#sc" width="8" height="8"/></svg>
<div class="lb" style="left:987.5px;top:49.85px">Command<br>Prompt</div>
<svg class="a" style="left:1032px;top:17px" width="21" height="27.6" ><use href="#fcl" width="21" height="27.6"/></svg>
<svg class="a" style="left:1027.5px;top:37.5px" width="8" height="8" ><use href="#sc" width="8" height="8"/></svg>
<div class="lb" style="left:1042.5px;top:49.05px">Emulators</div>
<svg class="a" style="left:1071px;top:16.4px" width="21" height="27.4" ><use href="#fdoc" width="21" height="27.4"/></svg>
<div class="lb" style="left:1081px;top:48.449999999999996px">Emulators</div>
<svg class="a" style="left:1107px;top:19.5px" width="21" height="26.6" ><use href="#fgam" width="21" height="26.6"/></svg>
<div class="lb" style="left:1114.5px;top:50.65px">Game</div>
<svg class="a" style="left:775px;top:73.2px" width="31" height="31" ><use href="#rdp" width="31" height="31"/></svg>
<svg class="a" style="left:774.5px;top:96px" width="8" height="8" ><use href="#sc" width="8" height="8"/></svg>
<div class="lb" style="left:789.7px;top:107.85000000000001px">Remote<br>Desktop ...</div>
<svg class="a" style="left:829.5px;top:75.5px" width="31.4" height="30.6" ><use href="#vs" width="31.4" height="30.6"/></svg>
<svg class="a" style="left:829.5px;top:98.5px" width="8" height="8" ><use href="#sc" width="8" height="8"/></svg>
<div class="lb" style="left:845px;top:110.15px">VS Express<br>2013 for ...</div>
<svg class="a" style="left:877px;top:79.4px" width="25.4" height="29.6" ><use href="#vlc" width="25.4" height="29.6"/></svg>
<svg class="a" style="left:873px;top:102px" width="8" height="8" ><use href="#sc" width="8" height="8"/></svg>
<div class="lb" style="left:888.4px;top:114.05000000000001px">VLC media<br>player</div>
<svg class="a" style="left:924.8px;top:77px" width="32.2" height="32" ><use href="#mm" width="32.2" height="32"/></svg>
<svg class="a" style="left:925px;top:101px" width="8" height="8" ><use href="#sc" width="8" height="8"/></svg>
<div class="lb" style="left:941px;top:112.55000000000001px">Windows<br>Movie Maker</div>
<svg class="a" style="left:973.4px;top:79.4px" width="29.8" height="21.8" ><use href="#ps" width="29.8" height="21.8"/></svg>
<svg class="a" style="left:972.5px;top:97.5px" width="8" height="8" ><use href="#sc" width="8" height="8"/></svg>
<div class="lb" style="left:989px;top:109.05000000000001px">Windows<br>PowerShell</div>
<svg class="a" style="left:1022.6px;top:80px" width="29.6" height="23.6" ><use href="#psi" width="29.6" height="23.6"/></svg>
<svg class="a" style="left:1021.5px;top:99px" width="8" height="8" ><use href="#sc" width="8" height="8"/></svg>
<div class="lb" style="left:1037.5px;top:110.65px">Windows<br>PowerSh...</div>
<svg class="a" style="left:1076.5px;top:81.6px" width="25.6" height="28.4" ><use href="#wp" width="25.6" height="28.4"/></svg>
<svg class="a" style="left:1072.5px;top:103.5px" width="8" height="8" ><use href="#sc" width="8" height="8"/></svg>
<div class="lb" style="left:1089px;top:114.85000000000001px">WordPad</div>
<svg class="a" style="left:1134px;top:79.4px" width="27" height="27" ><use href="#gc" width="27" height="27"/></svg>
<svg class="a" style="left:1131.5px;top:99.5px" width="8" height="8" ><use href="#sc" width="8" height="8"/></svg>
<div class="lb" style="left:1148px;top:111.25px">Game<br>Capture HD</div>
<svg class="a" style="left:1187.8px;top:79.6px" width="27" height="27" ><use href="#snd" width="27" height="27"/></svg>
<svg class="a" style="left:1185px;top:100px" width="8" height="8" ><use href="#sc" width="8" height="8"/></svg>
<div class="lb" style="left:1201px;top:112.15px">Sound<br>Capture</div>
<svg class="a" style="left:772px;top:152.6px" width="31.2" height="31.2" ><use href="#ff" width="31.2" height="31.2"/></svg>
<svg class="a" style="left:771.5px;top:176px" width="8" height="8" ><use href="#sc" width="8" height="8"/></svg>
<div class="lb" style="left:787.4px;top:188.05px">Firefox</div>
<svg class="a" style="left:821.4px;top:150.6px" width="29.8" height="29.8" ><use href="#ch" width="29.8" height="29.8"/></svg>
<svg class="a" style="left:820.5px;top:173.5px" width="8" height="8" ><use href="#sc" width="8" height="8"/></svg>
<div class="lb" style="left:836px;top:184.45000000000002px">Google<br>Chrome</div>
<svg class="a" style="left:865.4px;top:152px" width="30" height="30" ><use href="#ie" width="30" height="30"/></svg>
<svg class="a" style="left:865px;top:176px" width="8" height="8" ><use href="#sc" width="8" height="8"/></svg>
<div class="lb" style="left:880px;top:187.45000000000002px">Internet<br>Explorer</div>
<svg class="a" style="left:916px;top:149px" width="31.6" height="31.6" ><use href="#ed" width="31.6" height="31.6"/></svg>
<svg class="a" style="left:916px;top:172.5px" width="8" height="8" ><use href="#sc" width="8" height="8"/></svg>
<div class="lb" style="left:932px;top:184.05px">Microsoft<br>Edge</div>
<svg class="a" style="left:972.4px;top:149.6px" width="30.6" height="30.4" ><use href="#op" width="30.6" height="30.4"/></svg>
<svg class="a" style="left:972px;top:172.5px" width="8" height="8" ><use href="#sc" width="8" height="8"/></svg>
<div class="lb" style="left:987.6px;top:184.45000000000002px">Opera<br>Browser</div>
<svg class="a" style="left:773px;top:217.6px" width="31.2" height="31.2" ><use href="#ff" width="31.2" height="31.2"/></svg>
<svg class="a" style="left:772.5px;top:241.5px" width="8" height="8" ><use href="#sc" width="8" height="8"/></svg>
<div class="lb" style="left:789px;top:253.04999999999998px">Google<br>Office</div>
<svg class="a" style="left:820px;top:227.6px" width="29.8" height="29.8" ><use href="#ch" width="29.8" height="29.8"/></svg>
<svg class="a" style="left:819px;top:250px" width="8" height="8" ><use href="#sc" width="8" height="8"/></svg>
<div class="lb" style="left:834.8px;top:261.15px">PF</div>
<svg class="a" style="left:869px;top:222px" width="30.4" height="30.4" ><use href="#steam" width="30.4" height="30.4"/></svg>
<svg class="a" style="left:868px;top:245px" width="8" height="8" ><use href="#sc" width="8" height="8"/></svg>
<div class="lb" style="left:884px;top:256.45px">Steam</div>
<svg class="a" style="left:913.4px;top:220.5px" width="31.2" height="31.2" ><use href="#uplay" width="31.2" height="31.2"/></svg>
<svg class="a" style="left:913px;top:243.5px" width="8" height="8" ><use href="#sc" width="8" height="8"/></svg>
<div class="lb" style="left:929px;top:255.45000000000002px">Uplay</div>
<svg class="a" style="left:970px;top:223px" width="22.8" height="30.6" ><use href="#wt" width="22.8" height="30.6"/></svg>
<svg class="a" style="left:965px;top:246px" width="8" height="8" ><use href="#sc" width="8" height="8"/></svg>
<div class="lb" style="left:981px;top:257.15px">WarThunder</div>
<svg class="a" style="left:777.4px;top:288.4px" width="31.2" height="31.2" ><use href="#ff" width="31.2" height="31.2"/></svg>
<svg class="a" style="left:776.5px;top:312px" width="8" height="8" ><use href="#sc" width="8" height="8"/></svg>
<div class="lb" style="left:792px;top:323.65px">Crackle</div>
<svg class="a" style="left:772.6px;top:355.8px" width="27" height="19.8" ><use href="#gear" width="27" height="19.8"/></svg>
<div class="lb" style="left:786px;top:386.04999999999995px">Clean<br>Files.bat</div>
<svg class="a" style="left:864.7px;top:347px" width="30.4" height="30.8" ><use href="#shut" width="30.4" height="30.8"/></svg>
<svg class="a" style="left:865px;top:371px" width="8" height="8" ><use href="#sc" width="8" height="8"/></svg>
<div class="lb" style="left:881px;top:380.95px">Shutdown<br>Menu - ...</div>
<svg class="a" style="left:920px;top:354px" width="27" height="19.6" ><use href="#gear" width="27" height="19.6"/></svg>
<div class="lb" style="left:933.4px;top:383.95px">Transfer to<br>H-PC Se...</div>
<svg class="a" style="left:973px;top:353px" width="30" height="27.6" ><use href="#pc" width="30" height="27.6"/></svg>
<svg class="a" style="left:972.5px;top:374px" width="8" height="8" ><use href="#sc" width="8" height="8"/></svg>
<div class="lb" style="left:988px;top:385.04999999999995px">Work Menu</div>
<svg class="a" style="left:784px;top:425.8px" width="21.2" height="28" ><use href="#fdoc" width="21.2" height="28"/></svg>
<div class="lb" style="left:794.5px;top:458.04999999999995px">Business</div>
<svg class="a" style="left:832.8px;top:427.8px" width="21.2" height="27" ><use href="#fdoc2" width="21.2" height="27"/></svg>
<svg class="a" style="left:828px;top:448.5px" width="8" height="8" ><use href="#sc" width="8" height="8"/></svg>
<div class="lb" style="left:843.3px;top:459.95px">Web Business<br>Flash</div>
<svg class="a" style="left:878.3px;top:431.2px" width="21" height="27.6" ><use href="#fweb" width="21" height="27.6"/></svg>
<div class="lb" style="left:889px;top:463.15px">Websites</div>
<svg class="a" style="left:931.7px;top:424.2px" width="28" height="19.8" ><use href="#gear" width="28" height="19.8"/></svg>
<svg class="a" style="left:930px;top:443px" width="8" height="8" ><use href="#sc" width="8" height="8"/></svg>
<div class="lb" style="left:945px;top:454.45px">Flash<br>Drive.ba...</div>
<svg class="a" style="left:776px;top:490.6px" width="30.4" height="30.4" ><use href="#ch" width="30.4" height="30.4"/></svg>
<svg class="a" style="left:776px;top:514px" width="8" height="8" ><use href="#sc" width="8" height="8"/></svg>
<div class="lb" style="left:791.5px;top:524.4499999999999px">Google Drive</div>
<svg class="a" style="left:842px;top:484.6px" width="31" height="31" ><use href="#ff" width="31" height="31"/></svg>
<svg class="a" style="left:841.5px;top:508px" width="8" height="8" ><use href="#sc" width="8" height="8"/></svg>
<div class="lb" style="left:857.5px;top:519.9499999999999px">Google Drive<br>Firefox</div>
<svg class="a" style="left:898px;top:487.8px" width="31" height="31" ><use href="#ff" width="31" height="31"/></svg>
<svg class="a" style="left:897.5px;top:511.5px" width="8" height="8" ><use href="#sc" width="8" height="8"/></svg>
<div class="lb" style="left:913.5px;top:523.05px">Google<br>Hangouts</div>
<svg class="a" style="left:950px;top:488.6px" width="31" height="31" ><use href="#ff" width="31" height="31"/></svg>
<svg class="a" style="left:949.5px;top:512px" width="8" height="8" ><use href="#sc" width="8" height="8"/></svg>
<div class="lb" style="left:965.7px;top:523.85px">Google<br>Phone</div>
<svg class="a" style="left:794.3px;top:555.9px" width="20.8" height="27.8" ><use href="#fcl" width="20.8" height="27.8"/></svg>
<svg class="a" style="left:789px;top:576.5px" width="8" height="8" ><use href="#sc" width="8" height="8"/></svg>
<div class="lb" style="left:804.5px;top:588.05px">C++ -<br>Shortcut</div>
<svg class="a" style="left:843.3px;top:559.5px" width="21" height="26.6" ><use href="#fdoc2" width="21" height="26.6"/></svg>
<svg class="a" style="left:838.5px;top:580px" width="8" height="8" ><use href="#sc" width="8" height="8"/></svg>
<div class="lb" style="left:854px;top:591.05px">C++ Flash<br>Drive</div>
<svg class="a" style="left:895.8px;top:560.6px" width="20.8" height="27.2" ><use href="#fcl" width="20.8" height="27.2"/></svg>
<div class="lb" style="left:906.6px;top:592.85px">Logins</div>
<svg class="a" style="left:935.7px;top:561.8px" width="21" height="27.2" ><use href="#fcl" width="21" height="27.2"/></svg>
<svg class="a" style="left:931px;top:582px" width="8" height="8" ><use href="#sc" width="8" height="8"/></svg>
<div class="lb" style="left:946.5px;top:593.65px">M2</div>
<svg class="a" style="left:973px;top:559px" width="19.6" height="27" ><use href="#fpl" width="19.6" height="27"/></svg>
<div class="lb" style="left:983px;top:591.05px">Network<br>Drives</div>
<svg class="a" style="left:1008px;top:561.8px" width="20.6" height="27.2" ><use href="#fcl" width="20.6" height="27.2"/></svg>
<svg class="a" style="left:1003px;top:581.5px" width="8" height="8" ><use href="#sc" width="8" height="8"/></svg>
<div class="lb" style="left:1018.7px;top:593.65px">Pictures</div>
<svg class="a" style="left:1050px;top:561.8px" width="18.6" height="26.2" ><use href="#fpl" width="18.6" height="26.2"/></svg>
<div class="lb" style="left:1060.4px;top:593.65px">Shared Drives</div>
<svg class="a" style="left:1098px;top:558px" width="20.6" height="28" ><use href="#fdoc2" width="20.6" height="28"/></svg>
<div class="lb" style="left:1109px;top:590.65px">Template<br>HTML Pages</div>
<svg class="a" style="left:1148px;top:559.5px" width="20.4" height="27.6" ><use href="#fyt" width="20.4" height="27.6"/></svg>
<svg class="a" style="left:1142.5px;top:579.5px" width="8" height="8" ><use href="#sc" width="8" height="8"/></svg>
<div class="lb" style="left:1158.5px;top:591.05px">Youtube<br>Flash Drv</div>
<svg class="a" style="left:782.7px;top:632.5px" width="21.3" height="27.6" ><use href="#fdoc" width="21.3" height="27.6"/></svg>
<div class="lb" style="left:793.5px;top:664.15px">Tasks</div>
<svg class="a" style="left:1119px;top:2px" width="161" height="78" viewBox="0 0 161 78">
<rect x="0" y="0" width="161" height="78" fill="#0d0d0d"/><rect x="0" y="-1.4" width="161" height="1.2" fill="#b8b8b8"/>
<path d="M2 2 L161 2 L161 25 L148 25Z" fill="#22a64a"/>
<path d="M2 2 L148 25 L21 25Z" fill="#17a2ea"/>
<path d="M2 2 L21 25 L21 48 L2 76Z" fill="#3a3bcf"/>
<path d="M2 76 L21 48 L161 75 L161 76Z" fill="#3b9440"/>
<path d="M21 48 L148 48 L161 52 L161 75Z" fill="#1fa3cc"/>
<path d="M148 25 L161 10 L161 62 L148 48Z" fill="#2222de"/>
<path d="M2 2 L148 25 M2 2 L21 25 M2 76 L21 48 M21 48 L161 75 M148 25 L161 10 M148 48 L161 62" stroke="#0d0d0d" stroke-width="1" fill="none"/>
<rect x="21" y="25" width="127" height="23" fill="#fff" stroke="#0d0d0d" stroke-width="1"/>
</svg>
<div class="a" id="logot" style="left:1140.4px;top:27px;width:126px;height:23px;font-family:'Liberation Serif',serif;font-size:19.2px;line-height:23px;white-space:nowrap;color:#111"><span style="color:#2a9a3e">A</span><span style="color:#3a9ad8">c</span><span style="color:#3a4ec0">e</span>1000ks<span style="color:#9ab0dc">1</span><span style="color:#7a8ed0">9</span><span style="color:#3aa058">7</span><span style="color:#2a9a3e">5</span></div>
<div class="a" style="left:0;top:693px;width:1280px;height:27px;background:#2c3b3c"></div>
<svg class="a" style="left:10.2px;top:701px" width="11.6" height="11.2" viewBox="0 0 11.6 11.2"><path d="M0 1.6 L4.8 0.9 V5.3 H0Z M5.5 0.8 L11.6 0 V5.3 H5.5Z M0 6 H4.8 V10.3 L0 9.6Z M5.5 6 H11.6 V11.2 L5.5 10.4Z" fill="#fff"/></svg>
<div class="a" style="left:32px;top:693.2px;width:229px;height:26.8px;background:#e4e4e4"></div>
<svg class="a" style="left:39px;top:699px" width="12" height="13" viewBox="0 0 12 13"><circle cx="7.6" cy="4.8" r="3.4" fill="none" stroke="#333" stroke-width="1"/><path d="M5.2 7.4 L1 12" stroke="#333" stroke-width="1.1"/></svg>
<div class="a" id="srch" style="left:58.6px;top:701px;font-size:9.6px;line-height:12px;color:#333;white-space:nowrap">Type here to search</div>
<svg class="a" style="left:271px;top:700px" width="13" height="13" viewBox="0 0 13 13"><circle cx="6.2" cy="6.3" r="4.6" fill="none" stroke="#fff" stroke-width="1.4"/></svg>
<svg class="a" style="left:303.6px;top:701px" width="12" height="11" viewBox="0 0 12 11"><path d="M0.5 0.5 H2 M0.5 10 H2 M0.5 0.5 V2 M0.5 10 V8.5 M2.6 2.4 H8.2 V8 H2.6Z M10.4 0.4 V4.2 M10.4 5.6 V10.2 M9 2.4 h2.8" fill="none" stroke="#fff" stroke-width="1"/></svg>
<div class="a" style="left:622px;top:693px;width:31px;height:27px;background:#576565"></div>
<svg class="a" style="left:335.5px;top:700px" width="15.6" height="13.2" ><use href="#tb_exp" width="15.6" height="13.2"/></svg>
<div class="a" style="left:330px;top:718.4px;width:26px;height:1.6px;background:#86bdea"></div>
<svg class="a" style="left:368px;top:698px" width="15.8" height="15.8" ><use href="#tb_store" width="15.8" height="15.8"/></svg>
<svg class="a" style="left:400px;top:699.6px" width="17.6" height="14" ><use href="#tb_mail" width="17.6" height="14"/></svg>
<svg class="a" style="left:435px;top:698.8px" width="13" height="15.8" ><use href="#tb_calc" width="13" height="15.8"/></svg>
<svg class="a" style="left:466px;top:700px" width="16.6" height="13.4" ><use href="#tb_snip" width="16.6" height="13.4"/></svg>
<svg class="a" style="left:498px;top:698.8px" width="17" height="15" ><use href="#tb_paint" width="17" height="15"/></svg>
<svg class="a" style="left:534.4px;top:698px" width="10.8" height="16.6" ><use href="#tb_mic" width="10.8" height="16.6"/></svg>
<svg class="a" style="left:563.6px;top:698.8px" width="15" height="15" ><use href="#tb_note" width="15" height="15"/></svg>
<div class="a" style="left:558.8px;top:718.4px;width:26.200000000000045px;height:1.6px;background:#86bdea"></div>
<svg class="a" style="left:597px;top:698.8px" width="15.6" height="15.6" ><use href="#tb_clock" width="15.6" height="15.6"/></svg>
<svg class="a" style="left:629.5px;top:701.2px" width="15" height="11.4" ><use href="#tb_cmd" width="15" height="11.4"/></svg>
<div class="a" style="left:622px;top:718.4px;width:31px;height:1.6px;background:#86bdea"></div>
<svg class="a" style="left:662px;top:698.8px" width="16" height="15.8" ><use href="#opd" width="16" height="15.8"/></svg>
<svg class="a" style="left:694.5px;top:698.8px" width="16.4" height="16.4" ><use href="#ed" width="16.4" height="16.4"/></svg>
<svg class="a" style="left:727.5px;top:698px" width="17" height="16.6" ><use href="#ff" width="17" height="16.6"/></svg>
<div class="a" style="left:722px;top:718.4px;width:26.799999999999955px;height:1.6px;background:#86bdea"></div>
<svg class="a" style="left:760.4px;top:699.4px" width="16.6" height="15.6" ><use href="#tb_gc" width="16.6" height="15.6"/></svg>
<div class="a" style="left:755px;top:718.4px;width:26px;height:1.6px;background:#86bdea"></div>
<svg class="a" style="left:1158px;top:703.4px" width="9" height="6" viewBox="0 0 9 6"><path d="M0.6 5.2 L4.5 1.2 L8.4 5.2" fill="none" stroke="#fff" stroke-width="1.1"/></svg>
<svg class="a" style="left:1173px;top:702px" width="11" height="10" viewBox="0 0 11 10"><path d="M2.4 0.6 H10.4 V6.6 H2.4Z M4.6 9.2 H8.4 M6.5 6.6 V9.2 M0.5 3 H3.4 V5 H0.5Z" fill="none" stroke="#fff" stroke-width="0.9"/></svg>
<svg class="a" style="left:1188.6px;top:702px" width="12" height="9.4" viewBox="0 0 12 9.4"><path d="M0.5 3.2 H2.4 L5 0.8 V8.6 L2.4 6.2 H0.5Z" fill="none" stroke="#fff" stroke-width="0.85"/><path d="M6.6 3 C7.4 4 7.4 5.4 6.6 6.4 M8.2 1.8 C9.6 3.4 9.6 6 8.2 7.6 M9.8 0.6 C12 3 12 6.4 9.8 8.8" fill="none" stroke="#fff" stroke-width="0.8"/></svg>
<div class="a" id="tm" style="left:1193px;top:694.6px;width:61px;text-align:center;font-size:8.1px;line-height:12px;color:#fff;white-space:nowrap">11:01 AM<br>7/20/2020</div>
<svg class="a" style="left:1253px;top:701px" width="16" height="17" viewBox="0 0 16 17"><path d="M0.5 0.5 H11 V8 H4 L2 10 V8 H0.5Z" fill="#fff"/><path d="M2.4 2.6 H9 M2.4 4.3 H9 M2.4 6 H9" stroke="#2c3b3c" stroke-width="0.6"/><circle cx="10.2" cy="10.8" r="4.4" fill="#3a4646" stroke="#c9cfcf" stroke-width="0.7"/></svg>
<div class="a" style="left:1259.2px;top:706.6px;width:8px;text-align:center;font-size:7.4px;line-height:10px;color:#fff">4</div></div></body></html>
